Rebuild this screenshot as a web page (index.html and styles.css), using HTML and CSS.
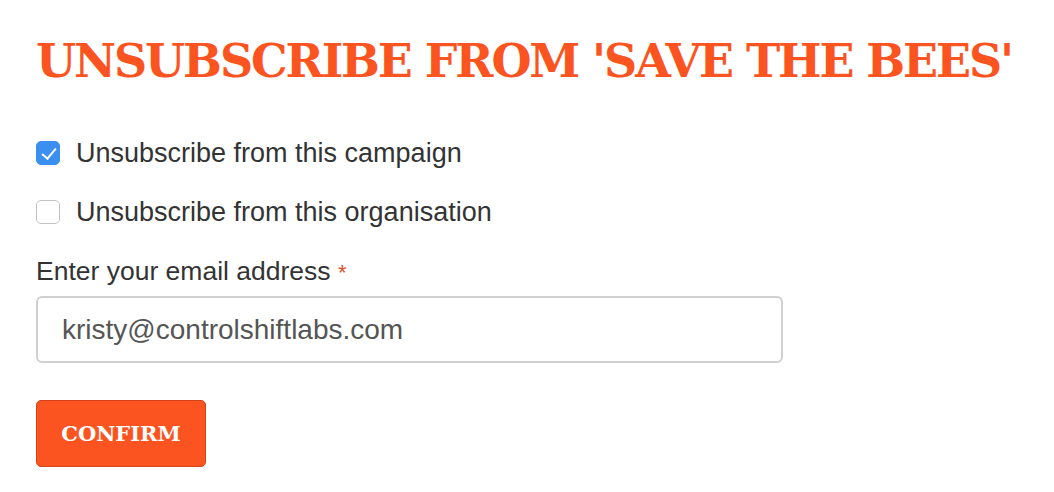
FILE: index.html
```html
<!DOCTYPE html>
<html lang="en">
<head>
    <meta charset="UTF-8">
    <meta name="viewport" content="width=device-width, initial-scale=1.0">
    <title>Unsubscribe</title>
    <link rel="stylesheet" href="styles.css">
</head>
<body>
    <div class="container">
        <h1 class="title">Unsubscribe from 'Save the Bees'</h1>

        <form class="unsubscribe-form">
            <label class="check-row">
                <input type="checkbox" name="campaign" checked>
                <span class="box"></span>
                Unsubscribe from this campaign
            </label>
            <label class="check-row">
                <input type="checkbox" name="organisation">
                <span class="box"></span>
                Unsubscribe from this organisation
            </label>

            <label class="field-label" for="email">Enter your email address <span class="required">*</span></label>
            <input type="email" id="email" class="email-input" value="kristy@controlshiftlabs.com">

            <button type="submit" class="confirm-btn">Confirm</button>
        </form>
    </div>
</body>
</html>
```

FILE: styles.css
```css
* {
    margin: 0;
    padding: 0;
    box-sizing: border-box;
}

body {
    background: #fff;
    color: #333;
    font-family: 'Liberation Sans', Arial, sans-serif;
}

.container {
    padding: 31px 36px;
}

.title {
    font-family: 'DejaVu Serif', serif;
    font-weight: bold;
    font-size: 46px;
    line-height: 60px;
    letter-spacing: -2.1px;
    white-space: nowrap;
    color: #fc5420;
    text-transform: uppercase;
    margin-bottom: 45px;
}

.unsubscribe-form {
    display: flex;
    flex-direction: column;
    align-items: flex-start;
}

.check-row {
    display: flex;
    align-items: center;
    gap: 16px;
    font-size: 27px;
    line-height: 34px;
    color: #333;
    margin-bottom: 25px;
    cursor: pointer;
}

.check-row input {
    display: none;
}

.box {
    width: 24px;
    height: 24px;
    border: 1px solid #c4c4c4;
    border-radius: 5px;
    background: #fff;
    position: relative;
}

.check-row input:checked + .box {
    background: #3b8ff0;
    border-color: #3b8ff0;
}

.check-row input:checked + .box::after {
    content: '';
    position: absolute;
    left: 8px;
    top: 3px;
    width: 6px;
    height: 12px;
    border: solid #fff;
    border-width: 0 2px 2px 0;
    transform: rotate(40deg);
}

.field-label {
    font-size: 26.5px;
    line-height: 34px;
    color: #333;
    margin-bottom: 6px;
}

.required {
    color: #e0502a;
    font-size: 22px;
}

.email-input {
    width: 747px;
    height: 67px;
    border: 2px solid #d0d0d0;
    border-radius: 6px;
    padding: 0 24px;
    font-family: 'Liberation Sans', Arial, sans-serif;
    font-size: 28px;
    color: #555;
    outline: 0;
    margin-bottom: 37px;
}

.confirm-btn {
    width: 170px;
    height: 67px;
    background: #fc5420;
    border: 1px solid #d2431a;
    border-radius: 5px;
    color: #fff;
    font-family: 'DejaVu Serif', serif;
    font-weight: bold;
    font-size: 21px;
    text-transform: uppercase;
    cursor: pointer;
}
```
